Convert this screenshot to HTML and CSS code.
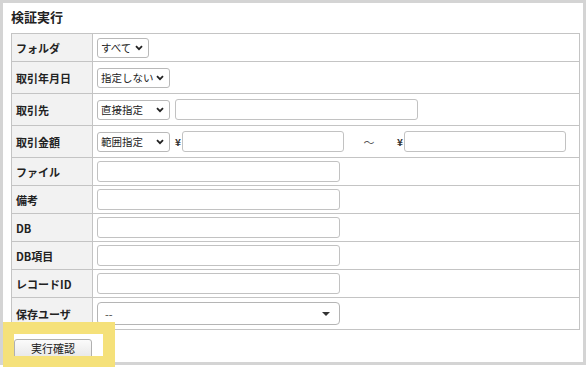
FILE: index.html
```html
<!DOCTYPE html>
<html lang="ja">
<head>
<meta charset="utf-8">
<link rel="stylesheet" href="styles.css">
</head>
<body>
<div class="panel">
  <div class="title">検証実行</div>
  <div class="form">
    <div class="label r28">フォルダ</div>
    <div class="value r28">
      <span class="sel w52"><span class="sel-text">すべて</span><svg class="chev" width="8" height="6" viewBox="0 0 8 6"><path d="M1 1.2 L4 4.2 L7 1.2" fill="none" stroke="#222" stroke-width="1.8"/></svg></span>
    </div>

    <div class="label r32">取引年月日</div>
    <div class="value r32">
      <span class="sel w73"><span class="sel-text">指定しない</span><svg class="chev" width="8" height="6" viewBox="0 0 8 6"><path d="M1 1.2 L4 4.2 L7 1.2" fill="none" stroke="#222" stroke-width="1.8"/></svg></span>
    </div>

    <div class="label r32">取引先</div>
    <div class="value r32">
      <span class="sel w73"><span class="sel-text">直接指定</span><svg class="chev" width="8" height="6" viewBox="0 0 8 6"><path d="M1 1.2 L4 4.2 L7 1.2" fill="none" stroke="#222" stroke-width="1.8"/></svg></span>
      <span class="inp w243 ml5"></span>
    </div>

    <div class="label r32">取引金額</div>
    <div class="value r32">
      <span class="sel w73"><span class="sel-text">範囲指定</span><svg class="chev" width="8" height="6" viewBox="0 0 8 6"><path d="M1 1.2 L4 4.2 L7 1.2" fill="none" stroke="#222" stroke-width="1.8"/></svg></span>
      <span class="yen yen1">¥</span>
      <span class="inp w162"></span>
      <span class="tilde">～</span>
      <span class="yen yen2">¥</span>
      <span class="inp w162"></span>
    </div>

    <div class="label r28">ファイル</div>
    <div class="value r28"><span class="inp w243"></span></div>

    <div class="label r28">備考</div>
    <div class="value r28"><span class="inp w243"></span></div>

    <div class="label r28">DB</div>
    <div class="value r28"><span class="inp w243"></span></div>

    <div class="label r28">DB項目</div>
    <div class="value r28"><span class="inp w243"></span></div>

    <div class="label r28">レコードID</div>
    <div class="value r28"><span class="inp w243"></span></div>

    <div class="label r32">保存ユーザ</div>
    <div class="value r32">
      <span class="combo"><span class="combo-text">--</span><span class="combo-arrow"></span></span>
    </div>
  </div>
  <div class="actions">
    <button class="btn" type="button">実行確認</button>
  </div>
</div>
<div class="highlight"></div>
</body>
</html>
```

FILE: styles.css
```css
html, body {
  margin: 0;
  padding: 0;
  background: #ffffff;
}

body {
  width: 588px;
  height: 367px;
  overflow: hidden;
  position: relative;
  font-family: "Noto Sans CJK JP", "Noto Sans", "Liberation Sans", sans-serif;
  color: #222;
}

.panel {
  box-sizing: border-box;
  width: 586px;
  height: 365px;
  border: 3px solid #d4d4d4;
  padding: 4px 0 0 8px;
}

.title {
  font-size: 13px;
  font-weight: bold;
  line-height: 20px;
  height: 20px;
  margin-bottom: 6px;
  color: #222;
}

.form {
  display: grid;
  grid-template-columns: 81px 487px;
  width: 569px;
  box-sizing: border-box;
  border-top: 1px solid #c4c4c4;
  border-left: 1px solid #c4c4c4;
}

.label,
.value {
  box-sizing: border-box;
  border-right: 1px solid #c4c4c4;
  border-bottom: 1px solid #c4c4c4;
  display: flex;
  align-items: center;
}

.r28 { height: 28px; }
.r32 { height: 32px; }

.label {
  background: #f2f2f2;
  font-size: 11px;
  font-weight: bold;
  padding-left: 4px;
  color: #222;
}

.value {
  padding-left: 4px;
}

.sel {
  box-sizing: border-box;
  height: 20px;
  border: 1px solid #b9b9b9;
  border-radius: 3px;
  background: #fff;
  display: flex;
  align-items: center;
  padding: 0 5px 0 3px;
  font-size: 10.5px;
  color: #222;
}

.sel-text {
  flex: 1;
  white-space: nowrap;
}

.chev {
  display: block;
  flex: none;
}

.w52 { width: 52px; }
.w73 { width: 73px; }
.w162 { width: 162px; }
.w243 { width: 243px; }
.ml5 { margin-left: 5px; }

.inp {
  display: block;
  box-sizing: border-box;
  height: 21px;
  border: 1px solid #c2c2c2;
  border-radius: 3px;
  background: #fff;
}

.yen {
  font-size: 10px;
  font-weight: bold;
  color: #333;
  text-align: right;
}
.yen1 {
  width: 11px;
  padding-right: 1px;
}
.yen2 {
  width: 9px;
  padding-right: 1px;
}

.tilde {
  width: 50px;
  text-align: center;
  font-size: 11px;
  color: #555;
}

.combo {
  box-sizing: border-box;
  width: 243px;
  height: 23px;
  border: 1px solid #b5b5b5;
  border-radius: 4px;
  background: #fff;
  display: flex;
  align-items: center;
  padding: 0 9px 0 7px;
  font-size: 11px;
  color: #444;
}

.combo-text {
  flex: 1;
}

.combo-arrow {
  width: 0;
  height: 0;
  border-left: 4px solid transparent;
  border-right: 4px solid transparent;
  border-top: 4px solid #333;
}

.actions {
  display: flex;
  margin: 9px 0 0 3px;
}

.btn {
  box-sizing: border-box;
  width: 78px;
  height: 21px;
  border: 1px solid #b0b0b0;
  border-radius: 3px;
  background: linear-gradient(#fbfbfb, #e6e6e6);
  font-family: "Noto Sans CJK JP", sans-serif;
  font-size: 11px;
  color: #222;
  padding: 0 0 2px 0;
  line-height: 17px;
}

.highlight {
  position: absolute;
  left: 3px;
  top: 322px;
  width: 112px;
  height: 45px;
  box-sizing: border-box;
  border-style: solid;
  border-color: #f5e17a;
  border-width: 12px 12px 11px 11px;
}
```
